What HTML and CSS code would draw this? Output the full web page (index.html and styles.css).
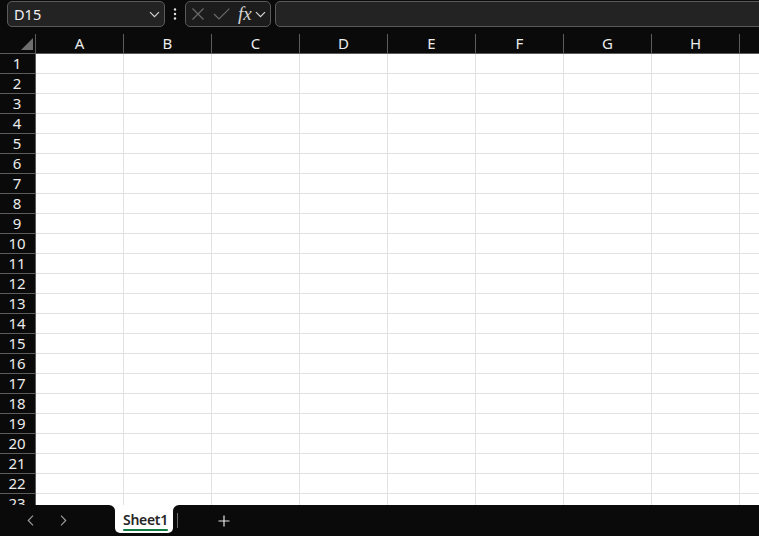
FILE: index.html
```html
<!DOCTYPE html>
<html lang="en">
<head>
<meta charset="utf-8">
<title>Sheet1</title>
<link rel="stylesheet" href="styles.css">
</head>
<body>
<div class="app">
  <header class="toolbar">
    <div class="namebox">
      <span class="name">D15</span>
      <svg class="chev" width="11" height="7" viewBox="0 0 11 7"><path d="M1 1.2l4.5 4.5 4.5-4.5"/></svg>
    </div>
    <div class="more">
      <svg width="4" height="14" viewBox="0 0 4 14"><circle cx="2" cy="2.5" r="1.2"/><circle cx="2" cy="7" r="1.2"/><circle cx="2" cy="11.5" r="1.2"/></svg>
    </div>
    <div class="fxgroup">
      <svg class="ic-x" width="14" height="14" viewBox="0 0 14 14"><path d="M1.5 1.5l11 11M12.5 1.5l-11 11"/></svg>
      <svg class="ic-check" width="17" height="12" viewBox="0 0 17 12"><path d="M1 6l5 5L16.3 0.7"/></svg>
      <span class="fx">fx</span>
      <svg class="chev" width="11" height="7" viewBox="0 0 11 7"><path d="M1 1.2l4.5 4.5 4.5-4.5"/></svg>
    </div>
    <div class="formula"></div>
  </header>

  <main class="sheet">
    <div class="corner"><svg width="12" height="12" viewBox="0 0 12 12"><path d="M12 0V12H0Z"/></svg></div>
    <div class="colheads">
      <div class="col">A</div>
      <div class="col">B</div>
      <div class="col">C</div>
      <div class="col">D</div>
      <div class="col">E</div>
      <div class="col">F</div>
      <div class="col">G</div>
      <div class="col">H</div>
      <div class="col"></div>
    </div>
    <div class="rowheads">
      <div class="row">1</div>
      <div class="row">2</div>
      <div class="row">3</div>
      <div class="row">4</div>
      <div class="row">5</div>
      <div class="row">6</div>
      <div class="row">7</div>
      <div class="row">8</div>
      <div class="row">9</div>
      <div class="row">10</div>
      <div class="row">11</div>
      <div class="row">12</div>
      <div class="row">13</div>
      <div class="row">14</div>
      <div class="row">15</div>
      <div class="row">16</div>
      <div class="row">17</div>
      <div class="row">18</div>
      <div class="row">19</div>
      <div class="row">20</div>
      <div class="row">21</div>
      <div class="row">22</div>
      <div class="row">23</div>
    </div>
    <div class="cells"></div>
  </main>

  <footer class="tabbar">
    <div class="tabnav">
      <button class="navbtn" aria-label="Previous sheet"><svg width="7" height="11" viewBox="0 0 7 11"><path d="M6 0.7L1.3 5.5 6 10.3"/></svg></button>
      <button class="navbtn" aria-label="Next sheet"><svg width="7" height="11" viewBox="0 0 7 11"><path d="M1 0.7l4.7 4.8L1 10.3"/></svg></button>
    </div>
    <div class="tab">
      <div class="tab-label">
        <span class="tab-text">Sheet1</span>
        <span class="tab-line"></span>
      </div>
    </div>
    <div class="tabrest">
      <span class="tabsep"></span>
      <button class="addbtn" aria-label="New sheet"><svg width="12" height="12" viewBox="0 0 12 12"><path d="M6 0.5v11M0.5 6h11"/></svg></button>
    </div>
  </footer>
</div>
</body>
</html>
```

FILE: styles.css
```css
html, body {
  margin: 0;
  padding: 0;
  background: #0a0a0a;
  overflow: hidden;
}

body {
  font-family: "Noto Sans", "Open Sans", sans-serif;
  color: #ececec;
}

.app {
  width: 759px;
  height: 536px;
  display: flex;
  flex-direction: column;
  overflow: hidden;
}

/* ---------- toolbar ---------- */
.toolbar {
  flex: none;
  height: 34px;
  box-sizing: border-box;
  padding: 1px 0 0 7px;
  display: flex;
  align-items: flex-start;
  overflow: hidden;
}

.namebox,
.fxgroup,
.formula {
  height: 26px;
  box-sizing: border-box;
  border: 1px solid #5a5a5a;
  border-radius: 5px;
  background: #232323;
}

.namebox {
  flex: none;
  width: 158px;
  display: flex;
  align-items: center;
  justify-content: space-between;
  padding: 0 4px 0 6px;
}

.name {
  font-size: 14.5px;
  color: #f2f2f2;
  line-height: 24px;
}

.chev path {
  fill: none;
  stroke: #d4d4d4;
  stroke-width: 1.2;
}

.more {
  flex: none;
  width: 20px;
  height: 26px;
  display: flex;
  align-items: center;
  justify-content: center;
}

.more circle {
  fill: #e4e4e4;
}

.fxgroup {
  flex: none;
  width: 86px;
  display: flex;
  align-items: center;
  padding-left: 5px;
  background: #1c1c1c;
}

.ic-x path,
.ic-check path {
  fill: none;
  stroke: #6a6a6a;
  stroke-width: 1.2;
}

.ic-check {
  margin-left: 8px;
}

.fx {
  margin-left: 8px;
  font-family: "Liberation Serif", "DejaVu Serif", serif;
  font-style: italic;
  font-size: 19px;
  line-height: 24px;
  color: #d2d2d2;
}

.fxgroup .chev {
  margin-left: 3px;
}

.formula {
  flex: 1;
  margin-left: 4px;
  margin-right: -8px;
}

/* ---------- sheet ---------- */
.sheet {
  flex: none;
  height: 471px;
  display: grid;
  grid-template-columns: 36px 1fr;
  grid-template-rows: 20px 1fr;
  overflow: hidden;
}

.corner {
  background: #0a0a0a;
  border-right: 1px solid #5c5c5c;
  border-bottom: 1px solid #5c5c5c;
  display: flex;
  align-items: flex-end;
  justify-content: flex-end;
  padding: 0 2px 3px 0;
}

.corner path {
  fill: #6e6e6e;
}

.colheads {
  display: flex;
  background: #0a0a0a;
  border-bottom: 1px solid #5c5c5c;
  overflow: hidden;
}

.col {
  flex: none;
  width: 88px;
  box-sizing: border-box;
  border-right: 1px solid #5c5c5c;
  text-align: center;
  font-size: 15px;
  line-height: 19px;
  color: #ececec;
}

.rowheads {
  display: flex;
  flex-direction: column;
  background: #0a0a0a;
  border-right: 1px solid #5c5c5c;
  overflow: hidden;
}

.row {
  flex: none;
  height: 20px;
  box-sizing: border-box;
  border-bottom: 1px solid #5c5c5c;
  text-align: center;
  font-size: 15px;
  line-height: 19px;
  color: #ececec;
  padding-right: 1px;
}

.cells {
  background-color: #ffffff;
  background-image:
    repeating-linear-gradient(to right, transparent 0 87px, #e1e1e1 87px 88px),
    repeating-linear-gradient(to bottom, transparent 0 19px, #e1e1e1 19px 20px);
}

/* ---------- sheet tabs ---------- */
.tabbar {
  flex: none;
  height: 31px;
  display: flex;
  background: linear-gradient(#ffffff 0 8px, #0a0a0a 8px);
}

.tabnav {
  flex: none;
  width: 115px;
  background: #0a0a0a;
  border-top-right-radius: 6px;
  display: flex;
  align-items: center;
  padding-left: 14px;
  box-sizing: border-box;
}

button {
  border: 0;
  background: none;
  padding: 0;
  margin: 0;
  display: flex;
  align-items: center;
  justify-content: center;
}

.navbtn {
  width: 33px;
  height: 31px;
}

.navbtn path {
  fill: none;
  stroke: #9a9a9a;
  stroke-width: 1.2;
}

.tab {
  flex: none;
  width: 58px;
  height: 28px;
  box-sizing: border-box;
  background: #ffffff;
  border-radius: 0 0 5px 5px;
  padding: 3px 0 0 8px;
}

.tab-label {
  display: inline-flex;
  flex-direction: column;
}

.tab-text {
  font-size: 14px;
  font-weight: 600;
  line-height: 19px;
  color: #262626;
  letter-spacing: -0.3px;
}

.tab-line {
  height: 2px;
  background: #107c41;
  border-radius: 1px;
}

.tabrest {
  flex: 1;
  background: #0a0a0a;
  border-top-left-radius: 6px;
  display: flex;
  align-items: center;
}

.tabsep {
  width: 1px;
  height: 15px;
  margin-left: 4px;
  background: #6a6a6a;
}

.addbtn {
  margin-left: 40px;
  width: 12px;
  height: 12px;
}

.addbtn path {
  fill: none;
  stroke: #e6e6e6;
  stroke-width: 1.2;
}
```
